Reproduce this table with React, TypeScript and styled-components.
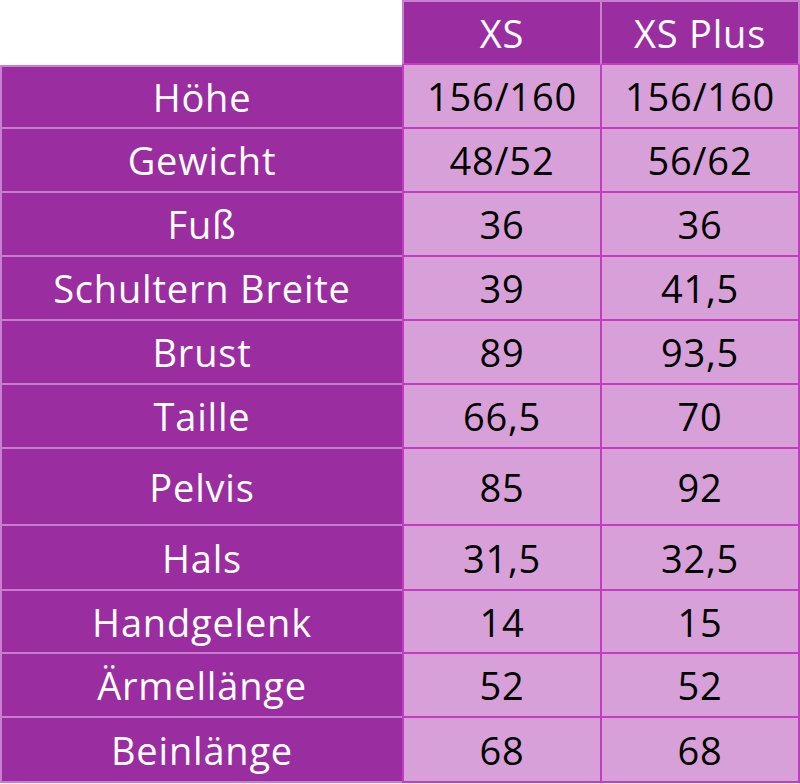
import React from "react";
import styled, { createGlobalStyle } from "styled-components";

const Global = createGlobalStyle`
  html, body { margin: 0; padding: 0; background: #ffffff; }
  body { font-family: "Open Sans", "Liberation Sans", sans-serif; }
`;

const Table = styled.div`
  display: grid;
  grid-template-columns: 402px 198px 200px;
  width: 800px;
`;

const Corner = styled.div`
  height: 65px;
  background: #ffffff;
`;

const cellText = `
  display: flex;
  align-items: center;
  justify-content: center;
  font-size: 38px;
  letter-spacing: 0.8px;
  box-sizing: border-box;
  white-space: nowrap;
`;

const HeadCell = styled.div<{ $last?: boolean }>`
  ${cellText}
  height: 65px;
  background: #9a2d9f;
  color: #ffffff;
  border-top: 2px solid #c97fcf;
  border-left: 2px solid #c97fcf;
  border-right: ${(p) => (p.$last ? "2px solid #c97fcf" : "0")};
  border-bottom: 2px solid #c43cc2;
`;

const LabelCell = styled.div<{ $h: number; $first?: boolean }>`
  ${cellText}
  height: ${(p) => p.$h}px;
  background: #9a2d9f;
  color: #ffffff;
  border-left: 2px solid #c97fcf;
  border-top: ${(p) => (p.$first ? "2px solid #c97fcf" : "0")};
  border-bottom: 2px solid #c77ccf;
`;

const ValueCell = styled.div<{ $h: number; $last?: boolean }>`
  ${cellText}
  height: ${(p) => p.$h}px;
  background: #d8a0d9;
  color: #000000;
  border-left: 2px solid #c43cc2;
  border-right: ${(p) => (p.$last ? "2px solid #c43cc2" : "0")};
  border-bottom: 2px solid #c43cc2;
`;

const rows: [string, string, string, number][] = [
  ["Höhe", "156/160", "156/160", 64],
  ["Gewicht", "48/52", "56/62", 64],
  ["Fuß", "36", "36", 64],
  ["Schultern Breite", "39", "41,5", 64],
  ["Brust", "89", "93,5", 64],
  ["Taille", "66,5", "70", 64],
  ["Pelvis", "85", "92", 77],
  ["Hals", "31,5", "32,5", 65],
  ["Handgelenk", "14", "15", 63],
  ["Ärmellänge", "52", "52", 64],
  ["Beinlänge", "68", "68", 65],
];

export default function App() {
  return (
    <>
      <Global />
      <Table>
        <Corner />
        <HeadCell>XS</HeadCell>
        <HeadCell $last>XS Plus</HeadCell>
        {rows.map(([label, a, b, h], i) => (
          <React.Fragment key={label}>
            <LabelCell $h={h} $first={i === 0}>{label}</LabelCell>
            <ValueCell $h={h}>{a}</ValueCell>
            <ValueCell $h={h} $last>{b}</ValueCell>
          </React.Fragment>
        ))}
      </Table>
    </>
  );
}
